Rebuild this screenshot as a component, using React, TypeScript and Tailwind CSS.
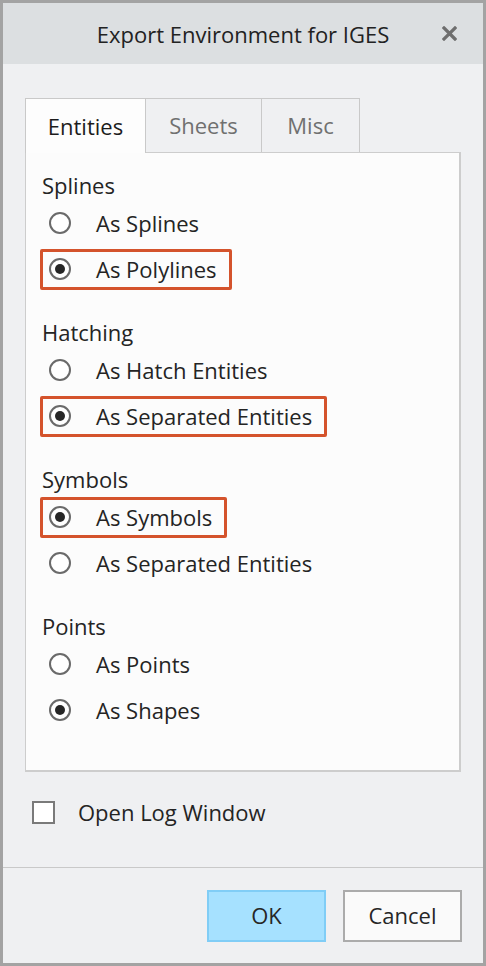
import React, { useState } from 'react';

type Group = { title: string; options: string[]; selected: number; flagged: boolean };

const groups: Group[] = [
  { title: 'Splines', options: ['As Splines', 'As Polylines'], selected: 1, flagged: true },
  { title: 'Hatching', options: ['As Hatch Entities', 'As Separated Entities'], selected: 1, flagged: true },
  { title: 'Symbols', options: ['As Symbols', 'As Separated Entities'], selected: 0, flagged: true },
  { title: 'Points', options: ['As Points', 'As Shapes'], selected: 1, flagged: false },
];

const Radio: React.FC<{ on: boolean }> = ({ on }) => (
  <span className="w-[22px] h-[22px] rounded-full border-2 border-[#6a6a6a] bg-white flex items-center justify-center shrink-0">
    {on && <span className="w-[10px] h-[10px] rounded-full bg-[#262626]" />}
  </span>
);

export default function App() {
  const [tab, setTab] = useState('Entities');
  const [sel, setSel] = useState(groups.map(g => g.selected));
  const [log, setLog] = useState(false);

  return (
    <div
      className="w-[486px] h-[966px] border-[3px] border-[#a3a3a3] bg-[#eff0f2] flex flex-col text-[#242424]"
      style={{ fontFamily: '"Segoe UI", "Open Sans", "Noto Sans", sans-serif' }}
    >
      {/* title bar */}
      <div className="h-[61px] shrink-0 bg-[#dcdfe1] grid grid-cols-[1fr_auto_1fr] items-center">
        <div />
        <div className="text-[22px] leading-none text-[#222]">Export Environment for IGES</div>
        <div className="flex justify-end pr-[26px]">
          <svg width="15" height="15" viewBox="0 0 15 15">
            <path d="M2 2 L13 13 M13 2 L2 13" stroke="#6e6e6e" strokeWidth="3.2" strokeLinecap="square" />
          </svg>
        </div>
      </div>

      <div className="px-[22px] pt-[34px] shrink-0">
        {/* tabs */}
        <div className="flex items-end h-[54px]">
          {['Entities', 'Sheets', 'Misc'].map((t, i) => {
            const active = tab === t;
            const w = i === 0 ? 'w-[121px]' : i === 1 ? 'w-[116px]' : 'w-[98px]';
            return (
              <button
                key={t}
                onClick={() => setTab(t)}
                className={`${w} flex items-center justify-center text-[22px] border-[#c9c9c9] border-t ${
                  active
                    ? 'h-[55px] -mb-px relative z-10 bg-[#fdfdfd] border-l border-r text-[#1c1c1c]'
                    : 'h-[54px] bg-[#eff0f2] border-r text-[#707070]'
                }`}
              >
                {t}
              </button>
            );
          })}
        </div>

        {/* panel */}
        <div className="h-[620px] bg-[#fcfcfc] border border-r-2 border-b-2 border-[#cdcdcd] pt-[17px] flex flex-col gap-[25px]">
          {groups.map((g, gi) => (
            <div key={g.title} className="flex flex-col">
              <div className="h-[30px] flex items-center pl-[16px] text-[22px]">{g.title}</div>
              {g.options.map((o, oi) => {
                const on = sel[gi] === oi;
                const box = on && g.flagged;
                return (
                  <div key={o} className="h-[46px] flex items-center">
                    <div
                      onClick={() => setSel(s => s.map((v, k) => (k === gi ? oi : v)))}
                      className={`ml-[14px] h-[41px] pl-[6px] pr-[12px] flex items-center gap-[25px] rounded-[2px] border-[3px] cursor-default ${
                        box ? 'border-[#d4532c]' : 'border-transparent'
                      }`}
                    >
                      <Radio on={on} />
                      <span className="text-[22px] leading-none">{o}</span>
                    </div>
                  </div>
                );
              })}
            </div>
          ))}
        </div>

        {/* log checkbox */}
        <div className="h-[80px] flex items-center pl-[7px] gap-[23px]">
          <button
            onClick={() => setLog(!log)}
            className="w-[23px] h-[23px] border-2 border-[#7a7a7a] bg-white flex items-center justify-center"
          >
            {log && (
              <svg width="14" height="14" viewBox="0 0 14 14">
                <path d="M2 7 L6 11 L12 3" stroke="#262626" strokeWidth="2" fill="none" />
              </svg>
            )}
          </button>
          <span className="text-[22px]">Open Log Window</span>
        </div>
      </div>

      <div className="mt-[15px] h-px bg-[#c9c9c9] shrink-0" />

      {/* footer */}
      <div className="flex-1 flex items-center justify-end gap-[17px] pr-[21px]">
        <button className="w-[119px] h-[52px] bg-[#a6e1ff] border-2 border-[#80cdf6] text-[22px] text-[#262626]">
          OK
        </button>
        <button className="w-[119px] h-[52px] bg-[#fafafa] border-2 border-[#ababab] text-[22px] text-[#262626]">
          Cancel
        </button>
      </div>
    </div>
  );
}
